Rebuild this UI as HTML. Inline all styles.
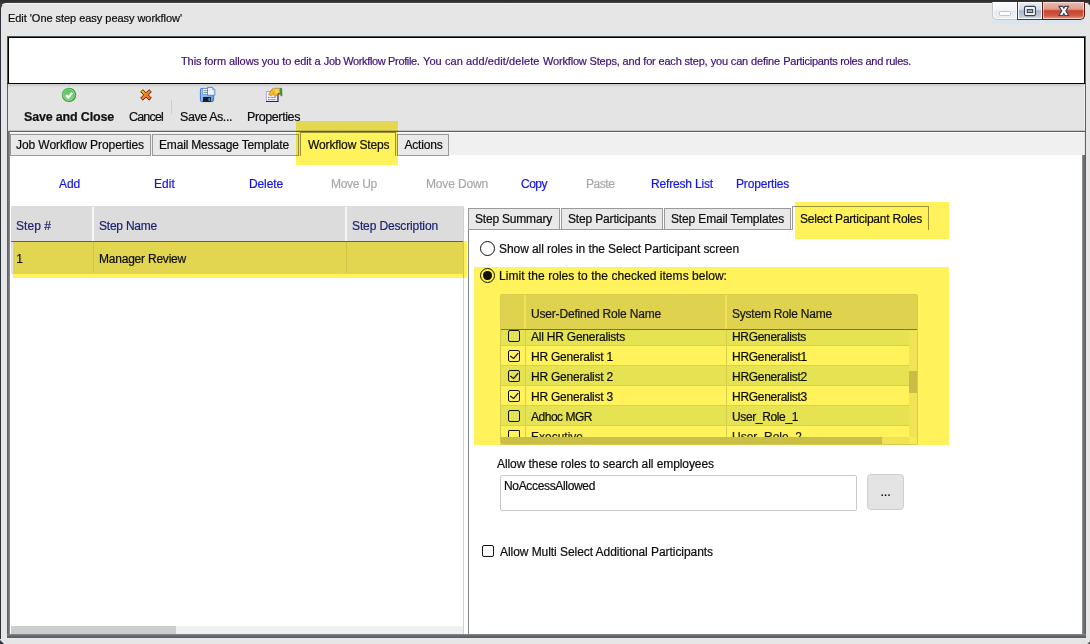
<!DOCTYPE html>
<html lang="en">
<head>
<meta charset="utf-8">
<title>Edit 'One step easy peasy workflow'</title>
<style>
html,body{margin:0;padding:0;}
body{width:1090px;height:644px;position:relative;overflow:hidden;background:#e6e6e6;font-family:'Liberation Sans','DejaVu Sans',sans-serif;}
.a{position:absolute;box-sizing:border-box;}
.t{position:absolute;white-space:nowrap;line-height:16px;height:16px;-webkit-text-stroke:0.200px currentColor;}
.tab{position:absolute;box-sizing:border-box;background:#e9e9e9;border:1px solid #9a9a9a;}
.hl{position:absolute;background:#fff25a;mix-blend-mode:multiply;}
.cb{position:absolute;box-sizing:border-box;width:12px;height:12px;border:1.300px solid #111;border-radius:2px;}
</style>
</head>
<body>
<!-- window chrome -->
<div class="a" style="left:0;top:0;width:1090px;height:4px;background:linear-gradient(#2a2a2a,#363636 50%,#4a4a4a 68%,#9a9a9a 80%,#e6e6e6);"></div>
<div class="a" style="left:0;top:0;width:9px;height:10px;background:linear-gradient(#2a2a2a,#3c3c3c 3px,#40444a);"></div>
<div class="a" style="left:0;top:3px;width:1087px;height:641px;border-left:1px solid #2d333b;border-top:1px solid #f4f4f4;border-top-left-radius:6px;background:#e6e6e6;"></div>
<div class="a" style="left:1087px;top:4px;width:3px;height:640px;background:#e6e6e6;"></div>
<div class="a" style="left:1087px;top:3px;width:3px;height:3px;background:linear-gradient(225deg,#333 30%,#e6e6e6 55%);"></div>
<div class="a" style="left:0;top:639px;width:4px;height:5px;background:linear-gradient(45deg,#2d333b 35%,#e6e6e6 55%);"></div>
<div class="a" style="left:1087px;top:641px;width:3px;height:3px;background:linear-gradient(135deg,#e6e6e6 45%,#444 70%);"></div>
<!-- window buttons -->
<div class="a" style="left:992px;top:19px;width:93px;height:5px;background:#dbe5f0;"></div>
<div class="a" style="left:992px;top:2px;width:26px;height:18px;background:linear-gradient(#fafbfc,#f4f5f8 48%,#e6e9f0 52%,#eef0f5);border:1px solid #c3c4d0;border-top:none;border-bottom-left-radius:5px;box-shadow:inset 0 0 0 1px rgba(255,255,255,.8);"></div>
<div class="a" style="left:999px;top:11px;width:12px;height:5px;border:1px solid #c4c2d2;border-radius:1.5px;background:#fdfdfd;"></div>
<div class="a" style="left:1017px;top:2px;width:26px;height:18px;background:linear-gradient(#e9eef4,#d3dce7 45%,#a7b5c8 52%,#bcc8d8 80%,#d5dde8);border:1px solid #3a3f4c;border-top:none;box-shadow:inset 0 0 0 1px rgba(255,255,255,.85);"></div>
<svg class="a" style="left:1023px;top:5px;" width="14" height="12" viewBox="0 0 14 12"><rect x="1.500" y="1.400" width="11" height="9.200" rx="1.500" fill="#f4f3f1" stroke="#3c4254" stroke-width="1.100"/><rect x="4.300" y="4.600" width="5.400" height="2.900" fill="#a9bccb" stroke="#3c4254" stroke-width="1.100"/></svg>
<div class="a" style="left:1042px;top:2px;width:43px;height:18px;background:linear-gradient(#edbdb2,#e19a8c 42%,#c84129 52%,#cf5a42 80%,#e59f88);border:1px solid #5a1a12;border-top:none;border-bottom-right-radius:5px;box-shadow:inset 0 0 0 1px rgba(255,255,255,.5);"></div>
<svg class="a" style="left:1057px;top:4px;" width="14" height="14" viewBox="0 0 14 14"><path d="M1.900 2.300h3.900L6.800 4.300 7.800 2.300h3.900L8.900 6.900 11.700 11.500H7.800L6.800 9.500 5.800 11.500H1.900L4.700 6.900z" fill="#f6f6f6" stroke="#3d4258" stroke-width="1.200" stroke-linejoin="round"/></svg>

<!-- info box -->
<div class="a" style="left:7px;top:36px;width:1079px;height:48px;background:#fff;border:1px solid #000;box-shadow:inset 1px 1px 0 #000, inset -1px 0 0 #000;border-color:#4a545f #5a6573 #000 #4a545f;"></div>

<!-- toolbar -->
<div class="a" style="left:8px;top:84px;width:1077px;height:46px;background:linear-gradient(#cdcdcd,#d4d4d4 2px,#e4e4e4 3px);"></div>
<div class="a" style="left:171px;top:100px;width:1px;height:14px;background:#bcd0ee;"></div>

<!-- frame lines -->
<div class="a" style="left:7px;top:84px;width:1px;height:552px;background:#5a6068;"></div>
<div class="a" style="left:1085px;top:84px;width:1px;height:552px;background:#5a6068;"></div>
<div class="a" style="left:1084px;top:84px;width:1px;height:47px;background:#f0f0f0;"></div>
<div class="a" style="left:8px;top:130px;width:1077px;height:2px;background:linear-gradient(#c6c6c6 50%,#5c5f64 50%);"></div>
<div class="a" style="left:10px;top:132px;width:1074px;height:23px;background:#f0f0f0;border-top:1px solid #fbfbfb;"></div>
<div class="a" style="left:10px;top:155px;width:1072px;height:480px;background:#fff;"></div>
<div class="a" style="left:8px;top:131px;width:2px;height:506px;background:linear-gradient(90deg,#666a70,#8c8f94);"></div>
<div class="a" style="left:1082px;top:155px;width:3px;height:482px;background:linear-gradient(90deg,#90939a,#6f7278 55%,#63666c);"></div>
<div class="a" style="left:7px;top:634px;width:1079px;height:4px;background:linear-gradient(#8a8d92,#63666b 45%,#5b5e63);"></div>

<!-- main tabs -->
<div class="tab" style="left:10px;top:134px;width:141px;height:22px;"></div>
<div class="tab" style="left:152px;top:134px;width:147px;height:22px;"></div>
<div class="tab" style="left:300px;top:132px;width:96px;height:24px;background:#fff;border-bottom:none;"></div>
<div class="tab" style="left:397px;top:134px;width:52px;height:22px;"></div>

<!-- left grid -->
<div class="a" style="left:11px;top:206px;width:453px;height:35px;background:#dcdcdc;"></div>
<div class="a" style="left:92px;top:207px;width:2px;height:34px;background:#f6f6f6;"></div>
<div class="a" style="left:345px;top:207px;width:2px;height:34px;background:#f6f6f6;"></div>
<div class="a" style="left:11px;top:241px;width:453px;height:33px;background:#e2e2e2;border-top:1px solid #4f7a5a;"></div>
<div class="a" style="left:93px;top:242px;width:1px;height:31px;background:#cfcfcf;"></div>
<div class="a" style="left:346px;top:242px;width:1px;height:31px;background:#cfcfcf;"></div>
<div class="a" style="left:463px;top:207px;width:1px;height:427px;background:#d0d0d0;"></div>
<!-- h scrollbar of left grid -->
<div class="a" style="left:11px;top:626px;width:452px;height:8px;background:#f0f0f0;"></div>
<div class="a" style="left:11px;top:626px;width:165px;height:8px;background:#cdcdcd;"></div>

<!-- right panel -->
<div class="a" style="left:468px;top:229px;width:1px;height:406px;background:#80848f;"></div>
<div class="a" style="left:468px;top:229px;width:325px;height:1px;background:#9a9a9a;"></div>
<div class="tab" style="left:468px;top:208px;width:92px;height:22px;"></div>
<div class="tab" style="left:561px;top:208px;width:102px;height:22px;"></div>
<div class="tab" style="left:664px;top:208px;width:127px;height:22px;"></div>
<div class="tab" style="left:792px;top:206px;width:137px;height:24px;background:#fff;border-bottom:none;"></div>

<!-- radios -->
<div class="a" style="left:480px;top:241px;width:15px;height:15px;border:1.300px solid #151515;border-radius:50%;background:#fff;"></div>
<div class="a" style="left:480px;top:268px;width:15px;height:15px;border:1.300px solid #151515;border-radius:50%;background:#fff;"></div>
<div class="a" style="left:483.300px;top:271.300px;width:8.400px;height:8.400px;border-radius:50%;background:#111;"></div>

<!-- role grid -->
<div class="a" style="left:500px;top:294px;width:418px;height:151px;background:#fff;border:1px solid #d6d6d6;border-radius:2px;"></div>
<div class="a" style="left:501px;top:295px;width:416px;height:34px;background:#dedede;"></div>
<div class="a" style="left:501px;top:329px;width:408px;height:17px;background:#e6f0ea;"></div>
<div class="a" style="left:501px;top:366px;width:408px;height:20px;background:#e6f0ea;"></div>
<div class="a" style="left:501px;top:406px;width:408px;height:20px;background:#e6f0ea;"></div>
<div class="a" style="left:501px;top:345px;width:408px;height:1px;background:#dcdcdc;"></div>
<div class="a" style="left:501px;top:365px;width:408px;height:1px;background:#dcdcdc;"></div>
<div class="a" style="left:501px;top:385px;width:408px;height:1px;background:#dcdcdc;"></div>
<div class="a" style="left:501px;top:405px;width:408px;height:1px;background:#dcdcdc;"></div>
<div class="a" style="left:501px;top:425px;width:408px;height:1px;background:#dcdcdc;"></div>
<div class="a" style="left:524px;top:295px;width:2px;height:34px;background:#efefef;"></div>
<div class="a" style="left:725px;top:295px;width:2px;height:34px;background:#efefef;"></div>
<div class="a" style="left:525px;top:329px;width:1px;height:108px;background:#d8d8d8;"></div>
<div class="a" style="left:726px;top:329px;width:1px;height:108px;background:#d8d8d8;"></div>
<div class="a" style="left:501px;top:329px;width:416px;height:1px;background:#5a8c78;"></div>
<!-- scrollbars -->
<div class="a" style="left:909px;top:330px;width:8px;height:107px;background:#f0f0f0;"></div>
<div class="a" style="left:909px;top:371px;width:8px;height:22px;background:#c8c8c8;"></div>
<div class="a" style="left:501px;top:437px;width:408px;height:7px;background:#f0f0f0;"></div>
<div class="a" style="left:501px;top:437px;width:381px;height:7px;background:#c9c9c9;"></div>
<div class="a" style="left:909px;top:437px;width:8px;height:7px;background:#f7f7f7;"></div>
<!-- checkboxes -->
<div class="cb" style="left:508px;top:330px;"></div>
<div class="cb" style="left:508px;top:350px;"></div>
<div class="cb" style="left:508px;top:370px;"></div>
<div class="cb" style="left:508px;top:390px;"></div>
<div class="cb" style="left:508px;top:410px;"></div>
<div class="cb" style="left:508px;top:430px;height:7px;border-bottom:none;border-radius:1.5px 1.5px 0 0;"></div>
<svg class="a" style="left:508px;top:350px;" width="12" height="12" viewBox="0 0 12 12"><path d="M2.200 5.900L5.700 8.400 10.200 3.200" fill="none" stroke="#111" stroke-width="1.200"/></svg>
<svg class="a" style="left:508px;top:370px;" width="12" height="12" viewBox="0 0 12 12"><path d="M2.200 5.900L5.700 8.400 10.200 3.200" fill="none" stroke="#111" stroke-width="1.200"/></svg>
<svg class="a" style="left:508px;top:390px;" width="12" height="12" viewBox="0 0 12 12"><path d="M2.200 5.900L5.700 8.400 10.200 3.200" fill="none" stroke="#111" stroke-width="1.200"/></svg>

<!-- textarea + button -->
<div class="a" style="left:500px;top:475px;width:357px;height:36px;background:#fff;border:1px solid #c8c8c8;border-radius:2px;"></div>
<div class="a" style="left:867px;top:474px;width:37px;height:36px;background:#e4e4e4;border:1px solid #cfcfcf;border-radius:4px;"></div>
<div class="cb" style="left:482px;top:545px;"></div>

<span class="t" style="left:8px;top:9.5px;font-size:11px;color:#0c0c10;letter-spacing:-0.040px;">Edit &#x27;One step easy peasy workflow&#x27;</span>
<span class="t" style="left:181px;top:53.0px;font-size:11px;color:#3d0f78;letter-spacing:-0.098px;">This form allows you to edit a</span>
<span class="t" style="left:323.8px;top:53.0px;font-size:11px;color:#3d0f78;letter-spacing:-0.353px;">Job Workflow Profile.</span>
<span class="t" style="left:423px;top:53.0px;font-size:11px;color:#3d0f78;letter-spacing:0.083px;">You can add/edit/delete</span>
<span class="t" style="left:543px;top:53.0px;font-size:11px;color:#3d0f78;letter-spacing:-0.173px;">Workflow Steps, and for each step,</span>
<span class="t" style="left:710.7px;top:53.0px;font-size:11px;color:#3d0f78;letter-spacing:-0.162px;">you can define</span>
<span class="t" style="left:783.3px;top:53.0px;font-size:11px;color:#3d0f78;letter-spacing:-0.277px;">Participants roles and rules.</span>
<span class="t" style="left:24px;top:109.0px;font-size:12.5px;color:#111;letter-spacing:-0.172px;font-weight:bold;">Save and Close</span>
<span class="t" style="left:129px;top:109.0px;font-size:12.5px;color:#0c0c10;letter-spacing:-0.820px;">Cancel</span>
<span class="t" style="left:180px;top:109.0px;font-size:12.5px;color:#0c0c10;letter-spacing:-0.428px;">Save As...</span>
<span class="t" style="left:247px;top:109.0px;font-size:12.5px;color:#0c0c10;letter-spacing:-0.398px;">Properties</span>
<span class="t" style="left:16px;top:137.0px;font-size:12px;color:#0c0c10;letter-spacing:-0.079px;">Job Workflow Properties</span>
<span class="t" style="left:159px;top:137.0px;font-size:12px;color:#0c0c10;letter-spacing:-0.175px;">Email Message Template</span>
<span class="t" style="left:308px;top:137.0px;font-size:12px;color:#0c0c10;letter-spacing:-0.117px;">Workflow Steps</span>
<span class="t" style="left:404.5px;top:137.0px;font-size:12px;color:#0c0c10;letter-spacing:-0.194px;">Actions</span>
<span class="t" style="left:59px;top:175.5px;font-size:12px;color:#1414f0;letter-spacing:-0.120px;">Add</span>
<span class="t" style="left:154px;top:175.5px;font-size:12px;color:#1414f0;letter-spacing:0.078px;">Edit</span>
<span class="t" style="left:249px;top:175.5px;font-size:12px;color:#1414f0;letter-spacing:-0.115px;">Delete</span>
<span class="t" style="left:331px;top:175.5px;font-size:12px;color:#a8a8a8;letter-spacing:-0.290px;">Move Up</span>
<span class="t" style="left:426px;top:175.5px;font-size:12px;color:#a8a8a8;letter-spacing:-0.151px;">Move Down</span>
<span class="t" style="left:521px;top:175.5px;font-size:12px;color:#1414f0;letter-spacing:-0.504px;">Copy</span>
<span class="t" style="left:586px;top:175.5px;font-size:12px;color:#a8a8a8;letter-spacing:-0.438px;">Paste</span>
<span class="t" style="left:651px;top:175.5px;font-size:12px;color:#1414f0;letter-spacing:-0.169px;">Refresh List</span>
<span class="t" style="left:736px;top:175.5px;font-size:12px;color:#1414f0;letter-spacing:-0.170px;">Properties</span>
<span class="t" style="left:16px;top:217.5px;font-size:12px;color:#1c2470;letter-spacing:0.049px;">Step #</span>
<span class="t" style="left:99px;top:217.5px;font-size:12px;color:#1c2470;letter-spacing:-0.226px;">Step Name</span>
<span class="t" style="left:352px;top:217.5px;font-size:12px;color:#1c2470;letter-spacing:-0.128px;">Step Description</span>
<span class="t" style="left:16.3px;top:250.5px;font-size:12px;color:#0c0c10;letter-spacing:-1.200px;">1</span>
<span class="t" style="left:99px;top:250.5px;font-size:12px;color:#0c0c10;letter-spacing:-0.218px;">Manager Review</span>
<span class="t" style="left:475px;top:210.5px;font-size:12px;color:#0c0c10;letter-spacing:-0.197px;">Step Summary</span>
<span class="t" style="left:568px;top:210.5px;font-size:12px;color:#0c0c10;letter-spacing:-0.160px;">Step Participants</span>
<span class="t" style="left:671px;top:210.5px;font-size:12px;color:#0c0c10;letter-spacing:-0.142px;">Step Email Templates</span>
<span class="t" style="left:800px;top:210.5px;font-size:12px;color:#0c0c10;letter-spacing:-0.225px;">Select Participant Roles</span>
<span class="t" style="left:499px;top:240.5px;font-size:12px;color:#0c0c10;letter-spacing:-0.074px;">Show all roles in the Select Participant screen</span>
<span class="t" style="left:499px;top:267.5px;font-size:12px;color:#0c0c10;letter-spacing:0.044px;">Limit the roles to the checked items below:</span>
<span class="t" style="left:531px;top:305.5px;font-size:12px;color:#14142a;letter-spacing:-0.185px;">User-Defined Role Name</span>
<span class="t" style="left:732px;top:305.5px;font-size:12px;color:#14142a;letter-spacing:-0.211px;">System Role Name</span>
<span class="t" style="left:531px;top:328.5px;font-size:12px;color:#0c0c10;letter-spacing:-0.224px;">All HR Generalists</span>
<span class="t" style="left:732px;top:328.5px;font-size:12px;color:#0c0c10;letter-spacing:-0.310px;">HRGeneralists</span>
<span class="t" style="left:531px;top:348.5px;font-size:12px;color:#0c0c10;letter-spacing:-0.225px;">HR Generalist 1</span>
<span class="t" style="left:732px;top:348.5px;font-size:12px;color:#0c0c10;letter-spacing:-0.285px;">HRGeneralist1</span>
<span class="t" style="left:531px;top:368.5px;font-size:12px;color:#0c0c10;letter-spacing:-0.225px;">HR Generalist 2</span>
<span class="t" style="left:732px;top:368.5px;font-size:12px;color:#0c0c10;letter-spacing:-0.285px;">HRGeneralist2</span>
<span class="t" style="left:531px;top:388.5px;font-size:12px;color:#0c0c10;letter-spacing:-0.225px;">HR Generalist 3</span>
<span class="t" style="left:732px;top:388.5px;font-size:12px;color:#0c0c10;letter-spacing:-0.285px;">HRGeneralist3</span>
<span class="t" style="left:531px;top:408.5px;font-size:12px;color:#0c0c10;letter-spacing:-0.484px;">Adhoc MGR</span>
<span class="t" style="left:732px;top:408.5px;font-size:12px;color:#0c0c10;letter-spacing:-0.368px;">User_Role_1</span>
<span class="t" style="left:497px;top:455.5px;font-size:12px;color:#0c0c10;letter-spacing:-0.076px;">Allow these roles to search all employees</span>
<span class="t" style="left:504px;top:477.5px;font-size:12px;color:#0c0c10;letter-spacing:-0.336px;">NoAccessAllowed</span>
<span class="t" style="left:880.5px;top:484.0px;font-size:13px;color:#0c0c10;letter-spacing:-0.281px;">...</span>
<span class="t" style="left:500px;top:543.5px;font-size:12px;color:#0c0c10;letter-spacing:-0.058px;">Allow Multi Select Additional Participants</span>

<!-- partially hidden last row text (clipped) -->
<div class="a" style="left:531px;top:429px;width:378px;height:8px;overflow:hidden;">
  <span class="t" style="left:0;top:0;font-size:12px;color:#1a1a1a;">Executive</span>
  <span class="t" style="left:201px;top:0;font-size:12px;color:#1a1a1a;">User_Role_2</span>
</div>

<!-- yellow highlights -->
<div class="hl" style="left:296px;top:121px;width:102px;height:44px;"></div>
<div class="hl" style="left:13px;top:241px;width:454px;height:37px;"></div>
<div class="hl" style="left:795px;top:202px;width:154px;height:37px;"></div>
<div class="hl" style="left:474px;top:267px;width:475px;height:178px;"></div>

<!-- toolbar icons -->
<svg class="a" style="left:60px;top:86px;" width="18" height="18" viewBox="0 0 18 18">
  <defs>
    <linearGradient id="gck" x1="0" y1="0" x2="1" y2="1"><stop offset="0" stop-color="#4fc04f"/><stop offset="1" stop-color="#1f8f1f"/></linearGradient>
    <linearGradient id="gck2" x1="0" y1="0" x2="0" y2="1"><stop offset="0" stop-color="#5fc05f"/><stop offset="1" stop-color="#86d386"/></linearGradient>
  </defs>
  <circle cx="9" cy="8.900" r="7.200" fill="url(#gck)"/>
  <circle cx="9" cy="8.900" r="5.700" fill="url(#gck2)" stroke="#a5dfa5" stroke-width="0.600"/>
  <path d="M6 9.200l2.300 2.300 4.100-4.700" fill="none" stroke="#fff" stroke-width="2.100" stroke-linejoin="miter"/>
</svg>
<svg class="a" style="left:138.600px;top:87.500px;" width="14" height="14" viewBox="0 0 15 15">
  <defs><linearGradient id="gx" x1="0" y1="0" x2="1" y2="1"><stop offset="0" stop-color="#ffd800"/><stop offset="0.450" stop-color="#f58220"/><stop offset="1" stop-color="#ee6420"/></linearGradient></defs>
  <path d="M4.200 1.800L7.500 5.100 10.800 1.800 13.200 4.100 9.900 7.400 13.200 10.700 10.800 13 7.500 9.700 4.200 13 1.800 10.700 5.100 7.400 1.800 4.100z" fill="url(#gx)" stroke="#5a1a00" stroke-width="1" stroke-linejoin="round"/>
</svg>
<svg class="a" style="left:199px;top:86px;" width="18" height="18" viewBox="0 0 18 18">
  <defs><linearGradient id="gfl" x1="0" y1="0" x2="1" y2="1"><stop offset="0" stop-color="#a6d0f7"/><stop offset="1" stop-color="#5b9be6"/></linearGradient></defs>
  <rect x="1.400" y="2.400" width="13.200" height="13.200" rx="1.500" fill="url(#gfl)" stroke="#3a78d0" stroke-width="1"/>
  <rect x="3.500" y="2.500" width="6" height="5.700" fill="#f4f4f4" stroke="#4a86d4" stroke-width="0.600"/>
  <rect x="4.500" y="4.200" width="4" height="0.900" fill="#8a8a8a"/><rect x="4.500" y="6" width="4" height="0.900" fill="#8a8a8a"/>
  <rect x="4" y="11" width="7.900" height="4.900" fill="#1c1c1c"/>
  <rect x="9.600" y="12" width="1.200" height="3" fill="#6ea8ea"/>
  <path d="M8.500 1.400h5l2.300 2.300v5.600H8.500z" fill="#e9f1fc" stroke="#4a86d4" stroke-width="0.900"/>
  <path d="M13.500 1.400l2.300 2.300h-2.300z" fill="#fff" stroke="#4a86d4" stroke-width="0.600"/>
</svg>
<svg class="a" style="left:265px;top:86px;" width="19" height="18" viewBox="0 0 19 18">
  <rect x="1.400" y="5.500" width="11.200" height="10" fill="#fdfdff" stroke="#a9a6dc" stroke-width="1"/>
  <path d="M1 15.500h12V6" fill="none" stroke="#26246e" stroke-width="1.100"/>
  <rect x="3" y="10.800" width="1.500" height="1.300" fill="#6a7a8a"/><rect x="5.300" y="10.800" width="5.500" height="1.300" fill="#8aa0e0"/>
  <rect x="3" y="13" width="1.500" height="1.300" fill="#6a7a8a"/><rect x="5.300" y="13" width="5.500" height="1.300" fill="#8aa0e0"/>
  <path d="M3.500 8.800C4.500 6 6.500 3 8.500 2.200h6.800l0.200 5.500-3 0.800-2.500 2.300-1.800-2.200-2 1.200z" fill="#f2b632" stroke="#8a6a1a" stroke-width="0.500"/>
  <path d="M9 3.200h5.500v3.200l-2.500 1-2-1.200z" fill="#f8d24a"/>
  <path d="M15 2.200l1.900 0.100 0.200 7.400-1 0.500-1.300-2.800z" fill="#3f9a3f" stroke="#2a7a2a" stroke-width="0.400"/>
  <circle cx="13.800" cy="7.800" r="0.700" fill="#7a1010"/>
</svg>

</body>
</html>
